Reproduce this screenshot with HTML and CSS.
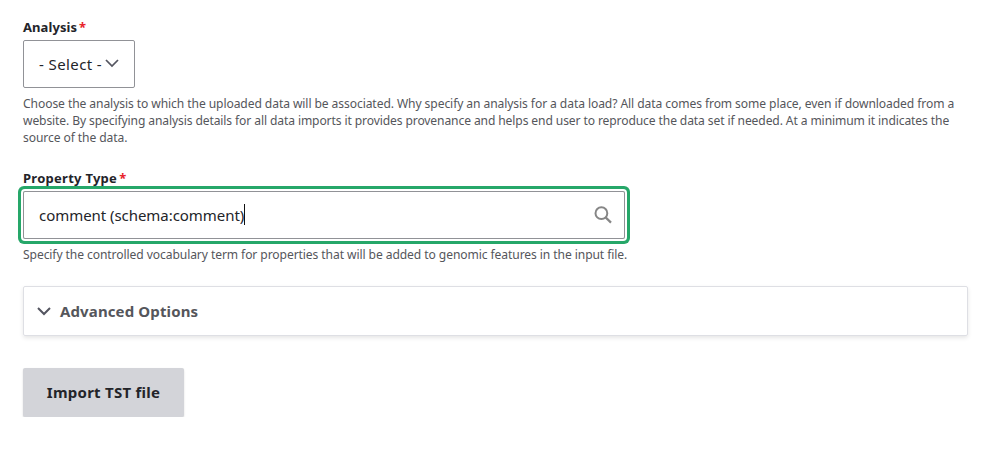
FILE: index.html
```html
<!DOCTYPE html>
<html lang="en">
<head>
<meta charset="utf-8">
<title>Import TST file</title>
<link rel="stylesheet" href="styles.css">
</head>
<body>
<form class="form">
  <div class="field">
    <label class="label"><span>Analysis</span><span class="required">*</span></label>
    <div class="select"><span class="select-text">- Select -</span>
      <svg class="select-icon" width="14" height="9" viewBox="0 0 14 9"><path d="M1 1l6 6 6-6" fill="none" stroke="#545560" stroke-width="1.75"/></svg>
    </div>
    <p class="help"><span>Choose the analysis to which the uploaded data will be associated. Why specify an analysis for a data load? All data comes from some place, even if downloaded from a</span><br><span class="help-tight">website. By specifying analysis details for all data imports it provides provenance and helps end user to reproduce the data set if needed. At a minimum it indicates the</span><br><span>source of the data.</span></p>
  </div>
  <div class="field field-property">
    <label class="label label-wide"><span>Property Type</span><span class="required">*</span></label>
    <div class="input"><span class="input-text">comment (schema:comment)</span><span class="caret"></span>
      <svg class="search" width="18" height="18" viewBox="0 0 18 18"><circle cx="7.4" cy="7.2" r="5.9" fill="none" stroke="#868686" stroke-width="2"/><path d="M11.6 11.4l5.4 5.2" stroke="#868686" stroke-width="2.2"/></svg>
    </div>
    <p class="help">Specify the controlled vocabulary term for properties that will be added to genomic features in the input file.</p>
  </div>
  <div class="details">
    <svg class="details-icon" width="14" height="9" viewBox="0 0 14 9"><path d="M1 1l6 6 6-6" fill="none" stroke="#545560" stroke-width="2"/></svg>
    <span>Advanced Options</span>
  </div>
  <div class="button"><span class="button-text">Import TST file</span></div>
</form>
</body>
</html>
```
FILE: styles.css
```css
* { box-sizing: border-box; }
body { margin: 0; background: #fff; color: #232429; font-family: "Noto Sans", sans-serif; }
.form { padding: 18px 32px 0 23px; }
.label { display: flex; height: 18px; margin-bottom: 4px; font-size: 13px; line-height: 18px; font-weight: 700; letter-spacing: .08px; white-space: nowrap; }
.label-wide { letter-spacing: .27px; }
.required { margin-left: 2px; color: #e8222a; }
.select { display: flex; align-items: center; width: 112px; height: 48px; padding: 0 0 0 15px; border: 1px solid #919297; border-radius: 2px; font-size: 15px; white-space: nowrap; }
.select-text { width: 66px; letter-spacing: .4px; }
.select-icon { margin-top: -2px; }
.help { margin: 7px 0 0; color: #55565b; font-size: 12.1px; line-height: 17px; letter-spacing: -.09px; white-space: nowrap; }
.help-tight { letter-spacing: -.115px; }
.field-property { margin-top: 23px; }
.input { display: flex; align-items: center; width: 602px; height: 48px; padding: 0 12px 0 15px; border: 1px solid #919297; border-radius: 2px; font-size: 15px; letter-spacing: -.05px; box-shadow: 0 0 0 2px #fff, 0 0 0 5px #26a769; }
.caret { width: 1px; height: 21px; margin-top: -1px; background: #111; }
.search { margin-left: auto; }
.details { display: flex; align-items: center; gap: 9px; height: 50px; margin-top: 23px; padding-left: 13px; border: 1px solid #dedfe4; border-radius: 2px; box-shadow: 0 2px 4px rgba(0,0,0,.1); color: #55565b; font-size: 15px; font-weight: 700; letter-spacing: .12px; }
.button { display: flex; align-items: center; justify-content: center; width: 161px; height: 49px; margin-top: 32px; padding-bottom: 2px; border-radius: 2px; background: #d3d4d9; font-size: 15px; font-weight: 700; letter-spacing: .25px; box-shadow: 0 1px 2px rgba(0,0,0,.15); }
```
